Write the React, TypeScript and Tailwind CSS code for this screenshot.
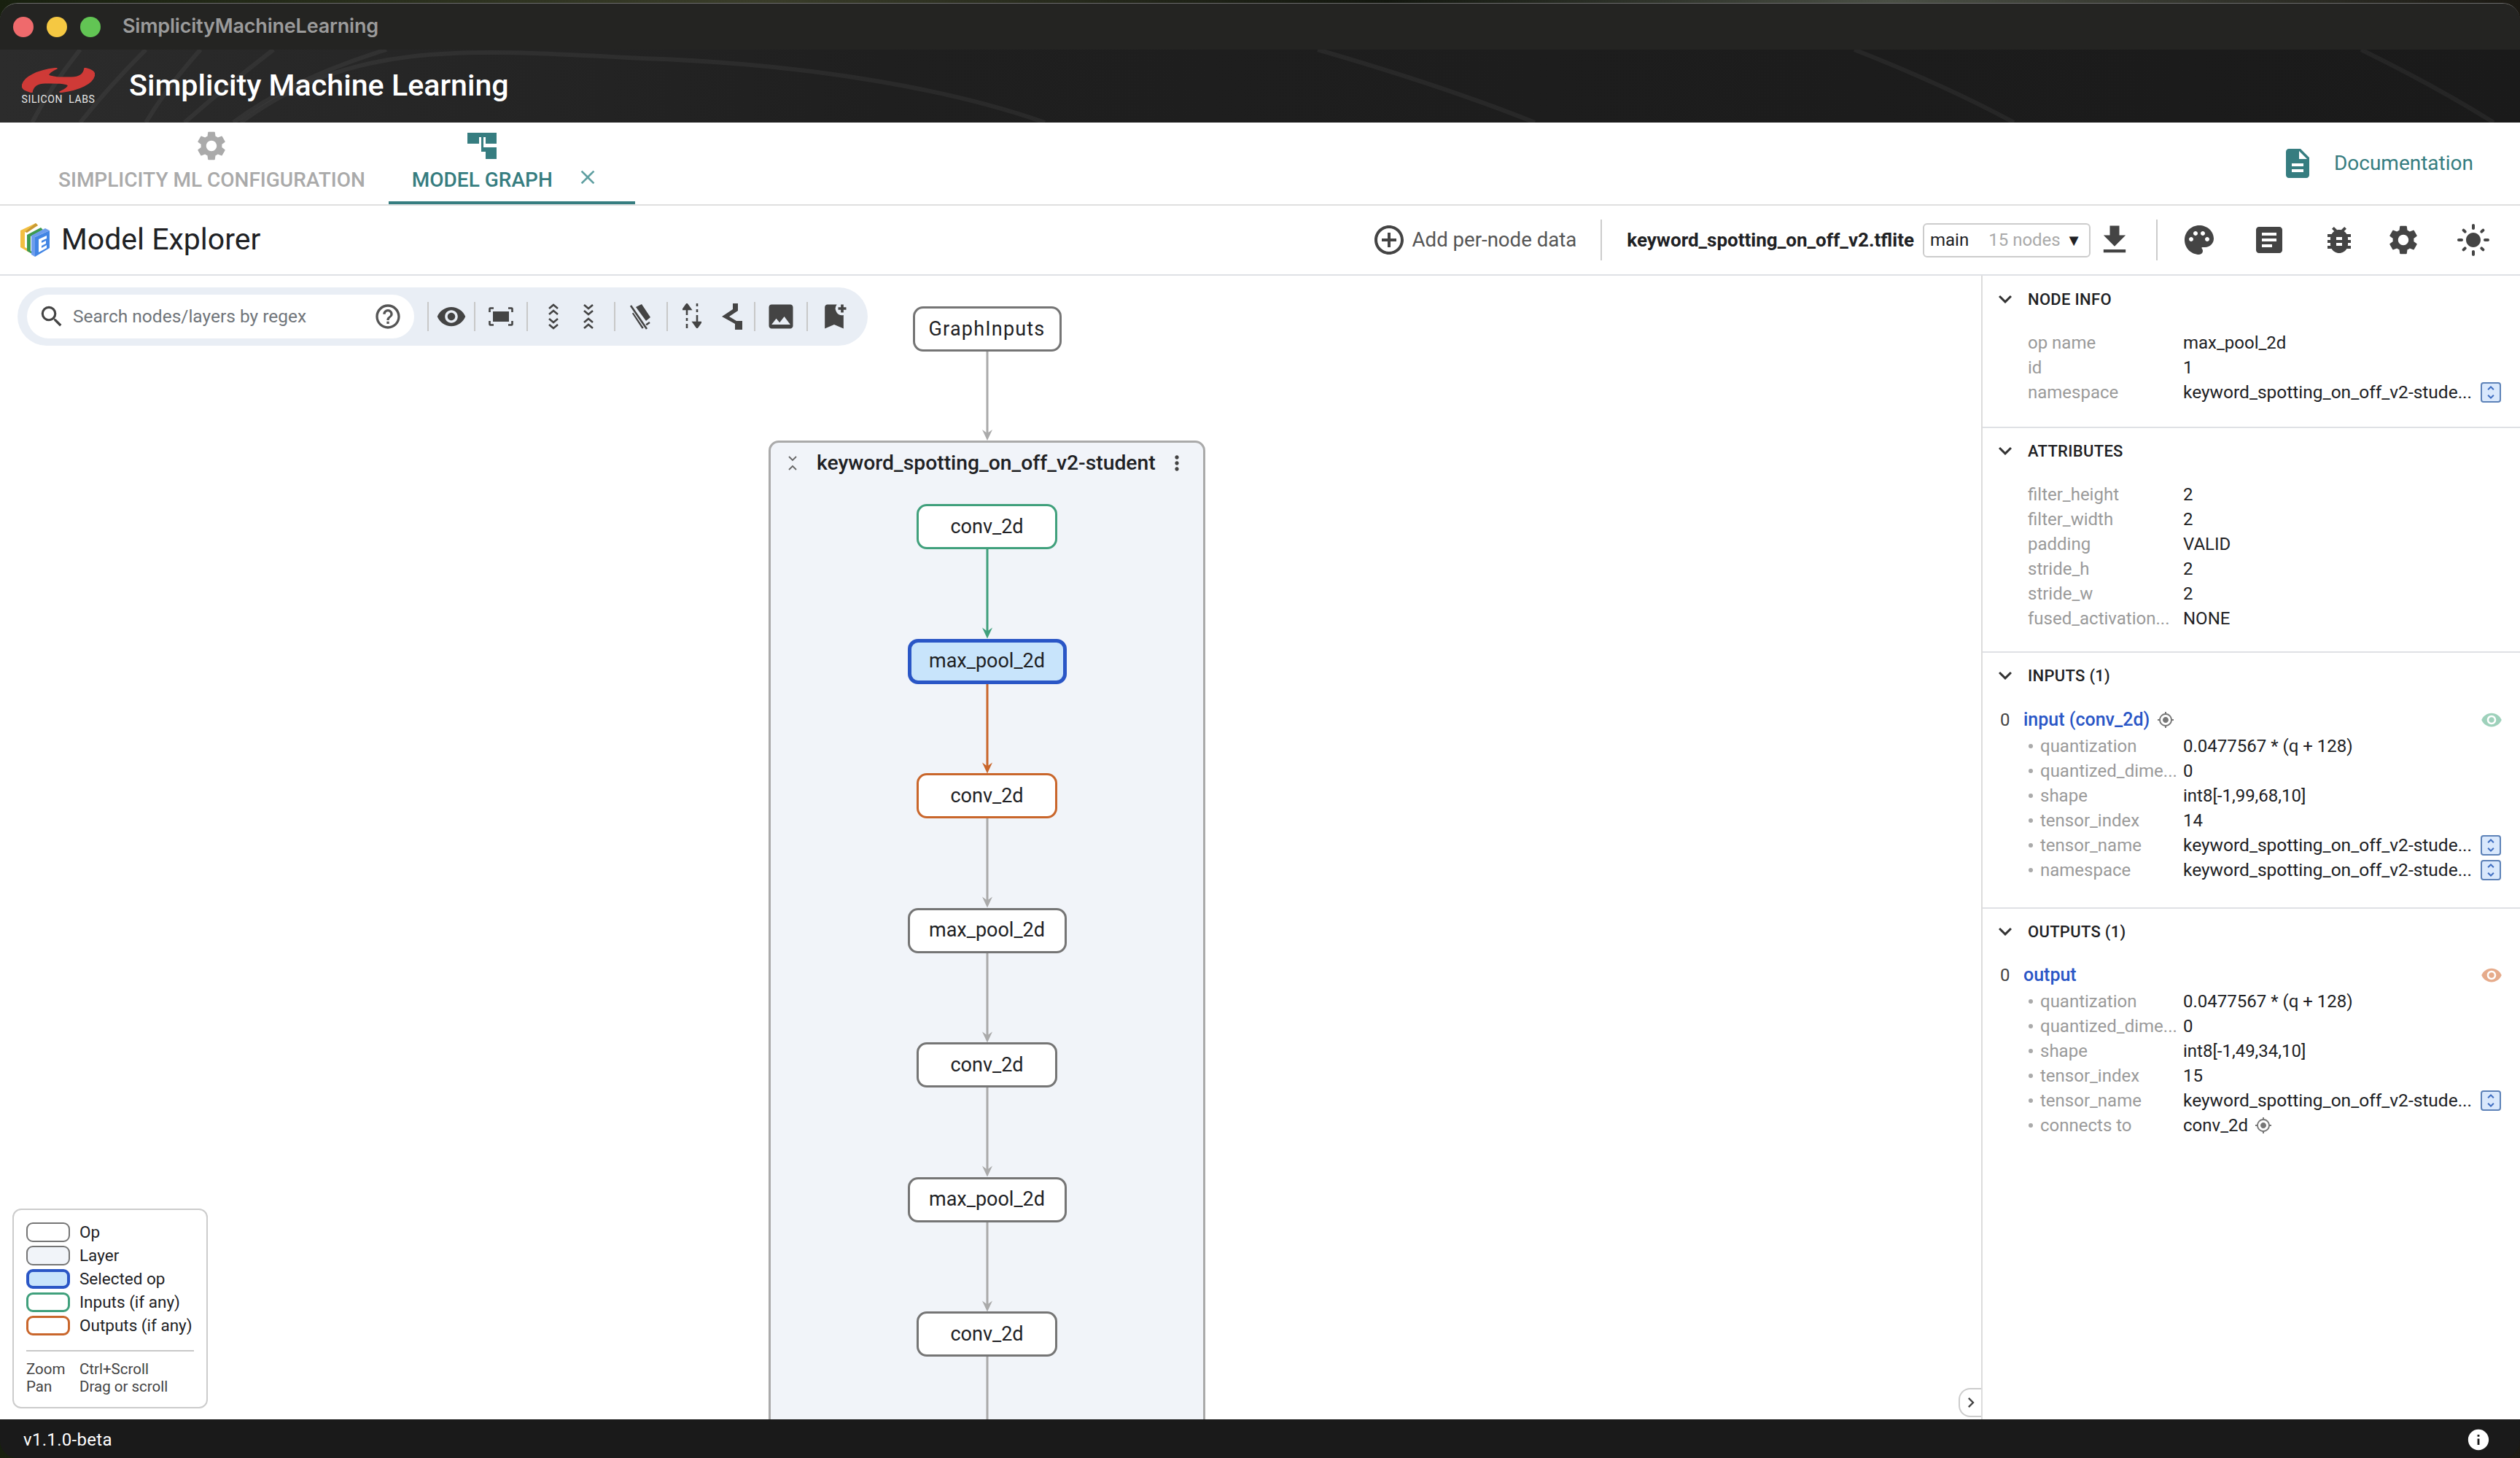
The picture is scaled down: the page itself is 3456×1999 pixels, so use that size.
import type { ReactNode } from "react"
import {
  MdAddCircleOutline,
  MdArticle,
  MdBookmarkAdd,
  MdBugReport,
  MdChevronRight,
  MdClose,
  MdDescription,
  MdDownload,
  MdHelpOutline,
  MdImage,
  MdInfo,
  MdKeyboardArrowDown,
  MdLightMode,
  MdMoreVert,
  MdMyLocation,
  MdPalette,
  MdSearch,
  MdSettings,
  MdUnfoldMore,
  MdVisibility,
} from "react-icons/md"

const LONG_NAME = "keyword_spotting_on_off_v2-stude..."

function HeaderArcs() {
  return (
    <svg className="absolute inset-0 w-full h-full" viewBox="0 0 3456 100" fill="none" stroke="#ffffff" strokeOpacity="0.05" strokeWidth="6">
      <path d="M110 0Q70 50 44 100" />
      <path d="M200 0Q150 50 110 100" />
      <path d="M275 0Q230 50 200 100" />
      <path d="M375 0Q310 50 253 100" />
      <path d="M530 0Q400 40 320 100" />
      <path d="M330 100C480 -10 620 -2 880 12C1130 20 1320 60 1433 100" />
      <path d="M1807 0Q1980 50 2105 100" />
      <path d="M2543 0Q2670 50 2762 100" />
      <path d="M3238 0Q3340 50 3420 100" />
    </svg>
  )
}

function SiliconLabsLogo() {
  return (
    <div className="flex flex-col items-center w-[100px]">
      <svg viewBox="36 12 294 100" className="w-[100px] h-[34px]" fill="#cf3a37" stroke="#cf3a37" strokeWidth="6">
        <path d="M38 85C42 50 100 22 178 14C150 26 132 40 150 50C175 62 225 62 232 84C205 70 165 72 130 72C100 72 80 85 76 110C52 104 38 98 38 85Z" />
        <path d="M328 39C324 74 266 102 188 110C216 98 234 84 216 74C191 62 141 62 134 40C161 54 201 52 236 52C266 52 286 39 290 14C314 20 328 26 328 39Z" />
      </svg>
      <span className="text-[14px] leading-[14px] text-[#e8e8e8] tracking-[0.6px] whitespace-pre mt-[2px]">SILICON  LABS</span>
    </div>
  )
}

function GraphTabIcon() {
  return (
    <svg viewBox="0 0 40 36" className="w-[40px] h-[36px]" fill="#367d80">
      <path d="M0 0H40V15H25V6H16V15H0Z" />
      <path d="M19 6H22V24H19Z" />
      <path d="M19 20H40V36H25V26H19Z" />
    </svg>
  )
}

function ModelExplorerLogo() {
  return (
    <svg viewBox="0 0 40 46" className="w-[40px] h-[46px]">
      <path d="M0 10L21 0L24 3L6 12V33L12 36V40L0 33Z" fill="#f2bf42" />
      <path d="M6 12L21 0L24 3L9 13Z" fill="#c99a33" />
      <path d="M9 16L28 6L31 9L14 18V38L19 41V44L9 38Z" fill="#3e9a4f" />
      <path d="M20 19L40 10V34L20 46Z" fill="#4285e4" />
      <path d="M15 17L34 7L40 10L20 19V46L15 43Z" fill="#6d9ded" />
      <path d="M25 22L36 17V21L29 24V27L35 24V28L29 31V34L36 30V34L25 40Z" fill="#ffffff" />
    </svg>
  )
}

function ExpandIcon() {
  return (
    <svg viewBox="0 0 16 36" className="w-[16px] h-[36px]" fill="none" stroke="#444444" strokeWidth="2.6">
      <path d="M2 7L8 2L14 7" />
      <path d="M2 15L8 10L14 15" />
      <path d="M2 21L8 26L14 21" />
      <path d="M2 29L8 34L14 29" />
    </svg>
  )
}

function CollapseIcon() {
  return (
    <svg viewBox="0 0 16 36" className="w-[16px] h-[36px]" fill="none" stroke="#444444" strokeWidth="2.6">
      <path d="M2 2L8 7L14 2" />
      <path d="M2 10L8 15L14 10" />
      <path d="M2 26L8 21L14 26" />
      <path d="M2 34L8 29L14 34" />
    </svg>
  )
}

function LayerCollapseIcon() {
  return (
    <svg viewBox="0 0 12 20" className="w-[12px] h-[20px]" fill="none" stroke="#666666" strokeWidth="1.8">
      <path d="M1 1L6 6L11 1" />
      <path d="M1 19L6 14L11 19" />
    </svg>
  )
}

function FitIcon() {
  return (
    <svg viewBox="0 0 34 26" className="w-[34px] h-[26px]" fill="none" stroke="#444444" strokeWidth="2.6">
      <path d="M1.5 7V2.5Q1.5 1.5 2.5 1.5H7" />
      <path d="M27 1.5H31.5Q32.5 1.5 32.5 2.5V7" />
      <path d="M32.5 19V23.5Q32.5 24.5 31.5 24.5H27" />
      <path d="M7 24.5H2.5Q1.5 24.5 1.5 23.5V19" />
      <rect x="6" y="6" width="22" height="14" fill="#444444" stroke="none" />
    </svg>
  )
}

function HideLayersIcon() {
  return (
    <svg viewBox="0 0 32 36" className="w-[32px] h-[36px]" fill="none" stroke="#444444" strokeWidth="2.6">
      <path d="M9 5L17 1L29 19L23 24Z" fill="#444444" stroke="none" />
      <path d="M5 13L18 33L28 26" />
      <path d="M2 3L24 35" stroke="#e9eef5" strokeWidth="5" />
      <path d="M2 3L24 35" />
    </svg>
  )
}

function TraceIcon() {
  return (
    <svg viewBox="0 0 26 34" className="w-[26px] h-[34px]" fill="none" stroke="#444444" strokeWidth="2.6">
      <path d="M6 34V28M6 24V20M6 16V6" />
      <path d="M1 8L6 1L11 8Z" fill="#444444" />
      <path d="M20 0V4M20 8V12M20 16V28" />
      <path d="M15 26L20 33L25 26Z" fill="#444444" />
    </svg>
  )
}

function SplitIcon() {
  return (
    <svg viewBox="0 0 30 36" className="w-[30px] h-[36px]" fill="#444444">
      <path d="M17 0H24V10L12 18L22 24H30V36H20V28L2 18L17 8Z" />
    </svg>
  )
}

function Tab({ icon, label, active, close }: { icon: ReactNode; label: string; active?: boolean; close?: boolean }) {
  return (
    <div className={`flex h-full ${active ? "border-b-[4px] border-[#367d80] text-[#367d80]" : "text-[#aaaaaa]"} px-[32px] pt-[10px]`}>
      <div className="flex flex-col items-center">
        <div className="h-[44px] flex items-center justify-center">{icon}</div>
        <span className="text-[28px] leading-[32px] mt-[9px] font-medium whitespace-nowrap">{label}</span>
      </div>
      {close && <MdClose className="w-[32px] h-[32px] ml-[32px] mr-[17px] mt-[49px] text-[#5f9fa1]" />}
    </div>
  )
}

function ToolSep() {
  return <div className="w-[2px] h-[40px] bg-[#c8c8c8] shrink-0" />
}

function SearchBar() {
  return (
    <div className="absolute left-[24px] top-[16px] w-[1166px] h-[80px] rounded-[40px] bg-[#e9eef5] flex items-center pl-[13px] text-[#444444]">
      <div className="w-[531px] h-[60px] rounded-[30px] bg-white flex items-center pl-[15px] pr-[16px] mr-[18px]">
        <MdSearch className="w-[38px] h-[38px] text-[#444444]" />
        <span className="text-[24.5px] text-[#70757a] ml-[10px] flex-1 whitespace-nowrap">Search nodes/layers by regex</span>
        <MdHelpOutline className="w-[40px] h-[40px] text-[#555555]" />
      </div>
      <ToolSep />
      <div className="w-[62px] flex justify-center"><MdVisibility className="w-[42px] h-[42px]" /></div>
      <ToolSep />
      <div className="w-[70px] flex justify-center"><FitIcon /></div>
      <ToolSep />
      <div className="w-[118px] flex justify-center gap-[32px]"><ExpandIcon /><CollapseIcon /></div>
      <ToolSep />
      <div className="w-[70px] flex justify-center"><HideLayersIcon /></div>
      <ToolSep />
      <div className="w-[118px] flex justify-center gap-[26px] pl-[4px]"><TraceIcon /><SplitIcon /></div>
      <ToolSep />
      <div className="w-[70px] flex justify-center"><MdImage className="w-[44px] h-[44px]" /></div>
      <ToolSep />
      <div className="w-[72px] flex justify-center"><MdBookmarkAdd className="w-[44px] h-[44px]" /></div>
    </div>
  )
}

function Legend() {
  const rows = [
    { label: "Op", box: "border-[#757575] bg-white border-[2px]" },
    { label: "Layer", box: "border-[#757575] bg-[#f1f4f9] border-[2px]" },
    { label: "Selected op", box: "border-[#2a56c6] bg-[#c8e4fb] border-[4px]" },
    { label: "Inputs (if any)", box: "border-[#40a07c] bg-white border-[3px]" },
    { label: "Outputs (if any)", box: "border-[#c9662b] bg-white border-[3px]" },
  ]
  return (
    <div className="absolute left-[17px] bottom-[15px] w-[268px] h-[274px] rounded-[12px] border-[2px] border-[#cccccc] bg-white pl-[17px] pr-[17px] pt-[17px]">
      <div className="flex flex-col gap-[5px]">
        {rows.map((row) => (
          <div key={row.label} className="flex items-center h-[27px]">
            <div className={`w-[60px] h-[27px] rounded-[9px] mr-[13px] ${row.box}`} />
            <span className="text-[22.5px] text-[#202124] whitespace-nowrap">{row.label}</span>
          </div>
        ))}
      </div>
      <div className="h-[2px] bg-[#c8c8c8] mt-[20px] mb-[12px]" />
      <div className="grid grid-cols-[73px_1fr] text-[20.5px] leading-[24px] text-[#444444]">
        <span>Zoom</span>
        <span>Ctrl+Scroll</span>
        <span>Pan</span>
        <span>Drag or scroll</span>
      </div>
    </div>
  )
}

function Edge({ color = "#aaaaaa", height = 122.5 }: { color?: string; height?: number }) {
  return (
    <svg width="24" height={height} className="block shrink-0">
      <line x1="12" y1="0" x2="12" y2={height - 8} stroke={color} strokeWidth="3" />
      <path d={`M12 ${height}L5 ${height - 15}L12 ${height - 10}L19 ${height - 15}Z`} fill={color} />
    </svg>
  )
}

function Node({ label, width, kind = "plain", wide }: { label: string; width: string; kind?: "plain" | "input" | "output" | "selected"; wide?: boolean }) {
  const styles = {
    plain: "border-[3px] border-[#757575] bg-white",
    input: "border-[3.5px] border-[#40a07c] bg-white",
    output: "border-[3.5px] border-[#c9662b] bg-white",
    selected: "border-[5px] border-[#2a56c6] bg-[#c8e4fb]",
  }
  return (
    <div className={`${width} h-[62px] shrink-0 rounded-[14px] flex items-center justify-center text-[27px] text-[#202124] ${wide ? "tracking-[1.2px]" : ""} ${styles[kind]}`}>
      {label}
    </div>
  )
}

function Graph() {
  return (
    <div className="w-[599px] ml-[1054px] mt-[42px] flex flex-col items-center">
      <Node label="GraphInputs" width="w-[204px]" wide />
      <Edge height={122} />
      <div className="w-full h-[1500px] rounded-t-[14px] border-[3px] border-[#aaaaaa] bg-[#f1f4f9] flex flex-col items-center">
        <div className="w-full h-[84px] shrink-0 flex items-start pl-[24px] pt-[12px] pr-[20px]">
          <div className="h-[32px] flex items-center"><LayerCollapseIcon /></div>
          <span className="text-[28.3px] leading-[32px] text-[#202124] font-medium ml-[27px] flex-1 whitespace-nowrap">keyword_spotting_on_off_v2-student</span>
          <MdMoreVert className="w-[32px] h-[32px] text-[#444444]" />
        </div>
        <Node label="conv_2d" width="w-[193px]" kind="input" />
        <Edge color="#40a07c" />
        <Node label="max_pool_2d" width="w-[218px]" kind="selected" />
        <Edge color="#c9662b" />
        <Node label="conv_2d" width="w-[193px]" kind="output" />
        <Edge />
        <Node label="max_pool_2d" width="w-[218px]" />
        <Edge />
        <Node label="conv_2d" width="w-[193px]" />
        <Edge />
        <Node label="max_pool_2d" width="w-[218px]" />
        <Edge />
        <Node label="conv_2d" width="w-[193px]" />
        <Edge />
      </div>
    </div>
  )
}

function PeekButton() {
  return (
    <div className="w-[28px] h-[28px] ml-[12px] shrink-0 rounded-[4px] border-[2px] border-[#5d82b8] bg-[#d9e8fc] flex items-center justify-center">
      <MdUnfoldMore className="w-[24px] h-[24px] text-[#3d6cc0]" />
    </div>
  )
}

function SectionHeader({ title }: { title: string }) {
  return (
    <div className="h-[62px] flex items-center pl-[13px]">
      <MdKeyboardArrowDown className="w-[36px] h-[36px] text-[#333333] mr-[13px]" />
      <span className="text-[22px] font-medium text-[#202124] tracking-[0.3px]">{title}</span>
    </div>
  )
}

function InfoRow({ label, value, peek, bullet, target }: { label: string; value: string; peek?: boolean; bullet?: boolean; target?: boolean }) {
  return (
    <div className="h-[34px] flex items-center text-[24px] leading-[34px]">
      <div className="w-[275px] shrink-0 flex items-center pl-[62px] text-[#9a9a9a] whitespace-nowrap">
        {bullet && <span className="w-[6px] h-[6px] rounded-full bg-[#aaaaaa] ml-[1px] mr-[10px] shrink-0" />}
        <span>{label}</span>
      </div>
      <span className={`text-[#202124] whitespace-nowrap ${peek ? "text-[24.5px]" : ""}`}>{value}</span>
      {target && <MdMyLocation className="w-[24px] h-[24px] ml-[9px] text-[#777777]" />}
      {peek && <PeekButton />}
    </div>
  )
}

function TensorHead({ name, eye, target }: { name: string; eye: string; target?: boolean }) {
  return (
    <div className="h-[38px] flex items-center text-[24px] pl-[24px] pr-[24px]">
      <span className="w-[32px] text-[#444444]">0</span>
      <span className="text-[25px] text-[#2a56c6] font-medium">{name}</span>
      {target && <MdMyLocation className="w-[24px] h-[24px] ml-[10px] text-[#777777]" />}
      <MdVisibility className={`w-[30px] h-[30px] ml-auto ${eye}`} />
    </div>
  )
}

function SidePanel() {
  return (
    <aside className="w-[739px] shrink-0 border-l-[2px] border-[#dcdcdc] pt-[1px] bg-white">
      <section className="border-b-[2px] border-[#dfe1e5] pb-[30px]">
        <SectionHeader title="NODE INFO" />
        <div className="pt-[12px]">
          <InfoRow label="op name" value="max_pool_2d" />
          <InfoRow label="id" value="1" />
          <InfoRow label="namespace" value={LONG_NAME} peek />
        </div>
      </section>
      <section className="border-b-[2px] border-[#dfe1e5] pb-[28px]">
        <SectionHeader title="ATTRIBUTES" />
        <div className="pt-[12px]">
          <InfoRow label="filter_height" value="2" />
          <InfoRow label="filter_width" value="2" />
          <InfoRow label="padding" value="VALID" />
          <InfoRow label="stride_h" value="2" />
          <InfoRow label="stride_w" value="2" />
          <InfoRow label="fused_activation..." value="NONE" />
        </div>
      </section>
      <section className="border-b-[2px] border-[#dfe1e5] pb-[34px]">
        <SectionHeader title="INPUTS (1)" />
        <div className="pt-[11px]">
          <TensorHead name="input (conv_2d)" eye="text-[#9ed1bb]" target />
          <InfoRow bullet label="quantization" value="0.0477567 * (q + 128)" />
          <InfoRow bullet label="quantized_dime..." value="0" />
          <InfoRow bullet label="shape" value="int8[-1,99,68,10]" />
          <InfoRow bullet label="tensor_index" value="14" />
          <InfoRow bullet label="tensor_name" value={LONG_NAME} peek />
          <InfoRow bullet label="namespace" value={LONG_NAME} peek />
        </div>
      </section>
      <section>
        <SectionHeader title="OUTPUTS (1)" />
        <div className="pt-[10px]">
          <TensorHead name="output" eye="text-[#e6ab8b]" />
          <InfoRow bullet label="quantization" value="0.0477567 * (q + 128)" />
          <InfoRow bullet label="quantized_dime..." value="0" />
          <InfoRow bullet label="shape" value="int8[-1,49,34,10]" />
          <InfoRow bullet label="tensor_index" value="15" />
          <InfoRow bullet label="tensor_name" value={LONG_NAME} peek />
          <InfoRow bullet label="connects to" value="conv_2d" target />
        </div>
      </section>
    </aside>
  )
}

export default function App() {
  return (
    <div className="w-[3456px] h-[1999px] overflow-hidden font-[Roboto,sans-serif] bg-[linear-gradient(90deg,#18200f_0%,#3a3d2a_30%,#13170f_55%,#4a4f45_75%,#1c1a14_100%)] pt-[4px]">
      <div className="h-[1995px] rounded-[24px] overflow-hidden flex flex-col border-t border-[#6b6b6b]">
        {/* mac title bar */}
        <div className="h-[63px] shrink-0 bg-[#242422] flex items-center pl-[18px]">
          <div className="flex gap-[18px]">
            <span className="w-[28px] h-[28px] rounded-full bg-[#ef6a6c]" />
            <span className="w-[28px] h-[28px] rounded-full bg-[#f5c842]" />
            <span className="w-[28px] h-[28px] rounded-full bg-[#62c554]" />
          </div>
          <span className="ml-[30px] text-[27px] font-semibold text-[#9b9b9b] font-[Inter,sans-serif] tracking-[-0.2px]">SimplicityMachineLearning</span>
        </div>

        {/* app header */}
        <header className="relative h-[100px] shrink-0 bg-[linear-gradient(90deg,#2c2c2c,#1f1f1f_35%,#1a1a1a)] flex items-center pl-[30px]">
          <HeaderArcs />
          <div className="relative flex items-center">
            <SiliconLabsLogo />
            <span className="ml-[47px] text-[41.2px] font-medium text-white whitespace-nowrap">Simplicity Machine Learning</span>
          </div>
        </header>

        {/* tabs */}
        <div className="h-[114px] shrink-0 bg-white border-b-[2px] border-[#dfdfdf] flex items-stretch pl-[48px]">
          <Tab icon={<MdSettings className="w-[48px] h-[48px]" />} label="SIMPLICITY ML CONFIGURATION" />
          <Tab icon={<GraphTabIcon />} label="MODEL GRAPH" active close />
          <div className="ml-auto mr-[64px] flex items-center text-[#367d80]">
            <MdDescription className="w-[48px] h-[48px]" />
            <span className="ml-[26px] text-[28px]">Documentation</span>
          </div>
        </div>

        {/* model explorer toolbar */}
        <div className="h-[96px] shrink-0 bg-white border-b-[2px] border-[#dfe1e5] flex items-center pl-[28px] pr-[40px]">
          <ModelExplorerLogo />
          <span className="ml-[16px] text-[41px] text-[#202124]">Model Explorer</span>
          <MdAddCircleOutline className="ml-auto w-[48px] h-[48px] text-[#444444]" />
          <span className="ml-[8px] text-[27.6px] text-[#555555] whitespace-nowrap">Add per-node data</span>
          <div className="w-[2px] h-[56px] bg-[#cccccc] ml-[33px] mr-[34px]" />
          <span className="text-[26px] font-bold text-[#202124] whitespace-nowrap">keyword_spotting_on_off_v2.tflite</span>
          <div className="ml-[12px] w-[230px] h-[47px] rounded-[6px] border-[2px] border-[#cccccc] flex items-center pl-[8px] pr-[10px] text-[24px]">
            <span className="text-[#202124]">main</span>
            <span className="ml-[27px] text-[#aaaaaa]">15 nodes</span>
            <span className="ml-auto text-[22px] text-[#202124]">▼</span>
          </div>
          <MdDownload className="ml-[7px] w-[52px] h-[52px] text-[#444444]" />
          <div className="w-[2px] h-[56px] bg-[#cccccc] ml-[31px] mr-[33px]" />
          <div className="flex items-center gap-[48px] text-[#444444]">
            <MdPalette className="w-[48px] h-[48px]" />
            <MdArticle className="w-[48px] h-[48px]" />
            <MdBugReport className="w-[48px] h-[48px] -mr-[8px]" />
            <MdSettings className="w-[48px] h-[48px]" />
            <MdLightMode className="w-[48px] h-[48px]" />
          </div>
        </div>

        {/* graph + side panel */}
        <div className="flex-1 min-h-0 flex bg-white">
          <main className="relative flex-1 overflow-hidden">
            <Graph />
            <SearchBar />
            <Legend />
            <div className="absolute right-0 bottom-[3px] w-[31px] h-[40px] rounded-l-[16px] border-[2px] border-r-0 border-[#cccccc] bg-white flex items-center justify-center">
              <MdChevronRight className="w-[28px] h-[28px] text-[#444444]" />
            </div>
          </main>
          <SidePanel />
        </div>

        {/* footer */}
        <footer className="h-[53px] shrink-0 bg-[#1a1a1a] flex items-center justify-between pl-[32px] pr-[40px] pt-[2px]">
          <span className="text-[24px] text-white tracking-[0.3px]">v1.1.0-beta</span>
          <MdInfo className="w-[34px] h-[34px] text-white" />
        </footer>
      </div>
    </div>
  )
}
